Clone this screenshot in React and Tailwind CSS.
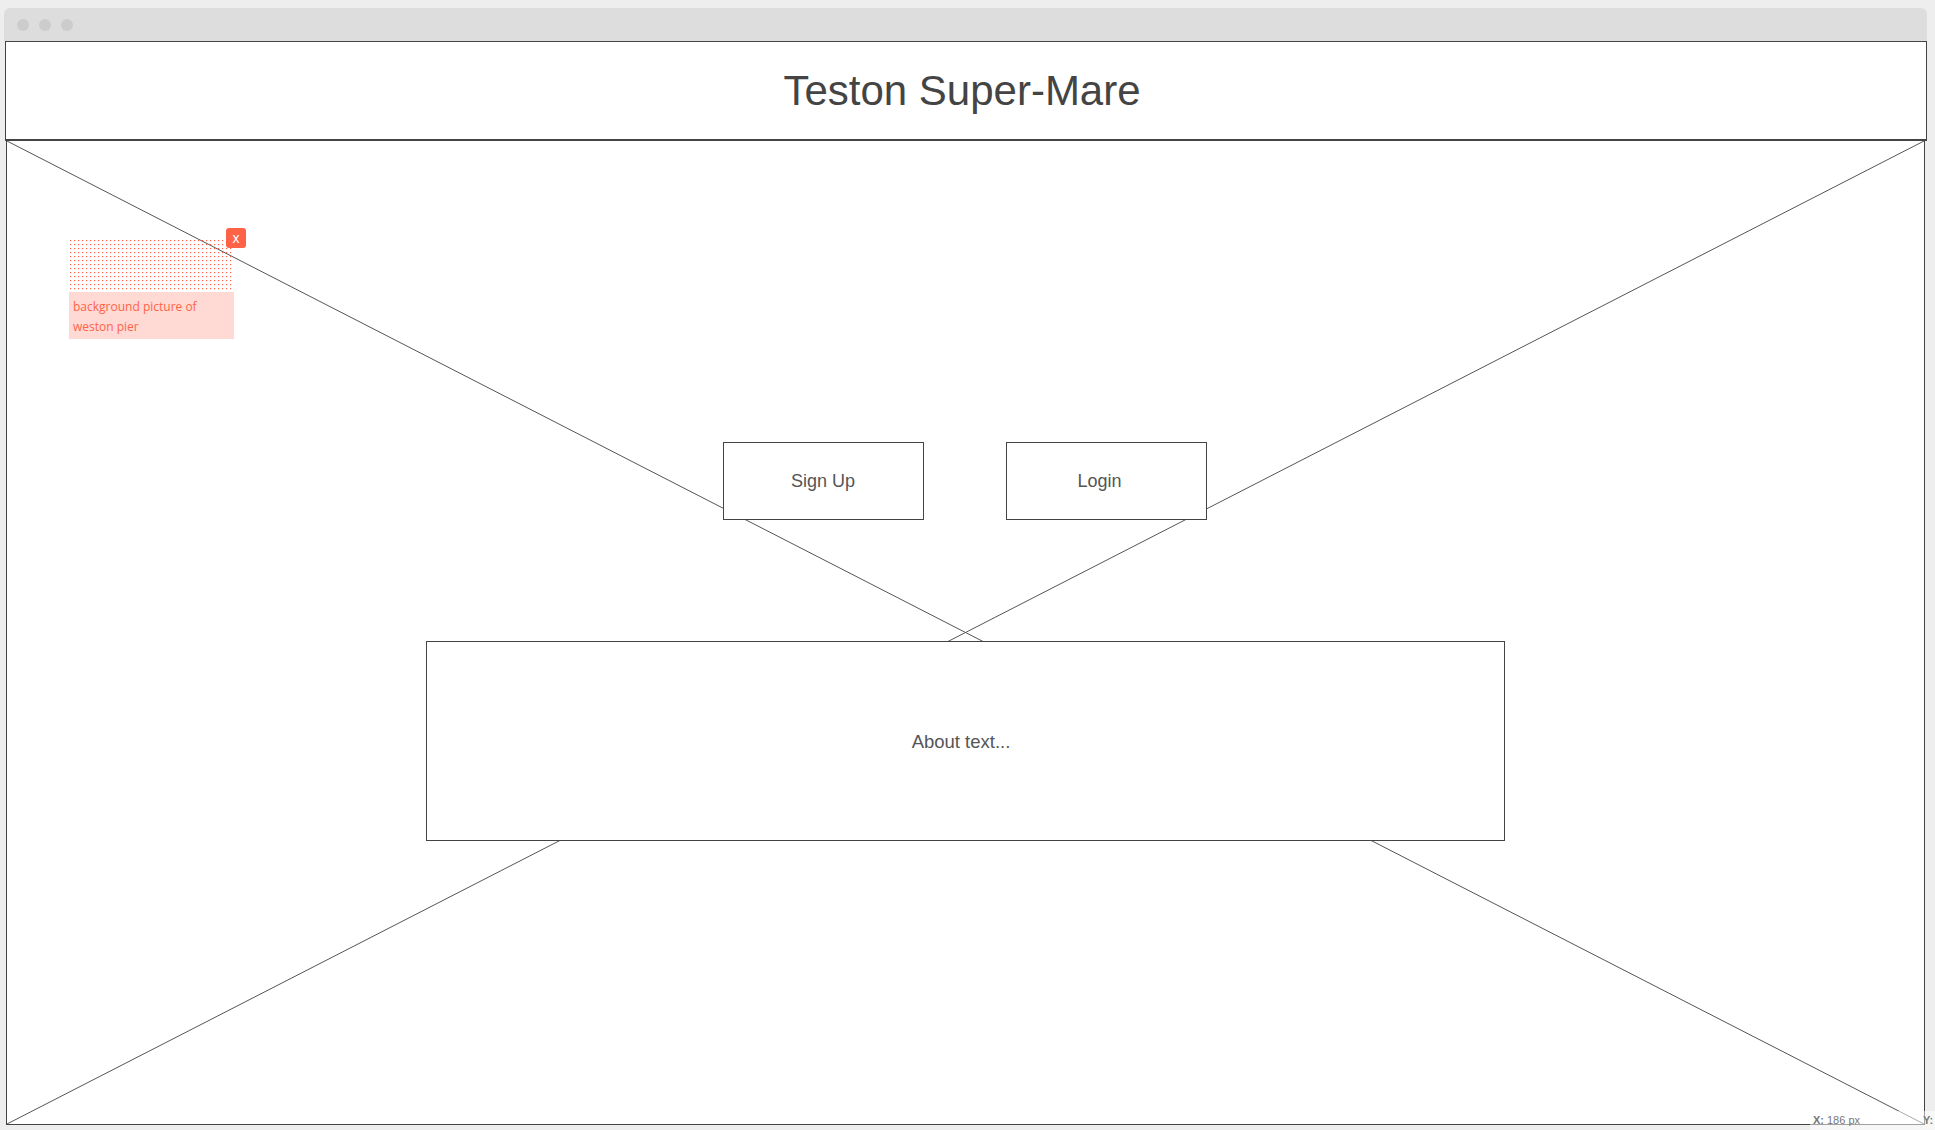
const Dot = () => <div className="w-[12px] h-[12px] rounded-full bg-[#cccccc]" />;

const BrowserBar = () => {
  return (
    <div className="w-[1923px] h-[33px] bg-[#dddddd] rounded-t-[6px] flex items-center gap-[10px] pl-[13px]">
      <Dot />
      <Dot />
      <Dot />
    </div>
  );
};

const Header = () => {
  return (
    <div className="ml-[1px] w-[1922px] h-[100px] bg-white border border-b-2 border-[#444444] flex items-center justify-center">
      <h1 className="text-[42px] leading-none text-[#444444] -ml-[8px] mt-[1px]">
        Teston Super-Mare
      </h1>
    </div>
  );
};

// picture placeholder cross
const Cross = () => {
  return (
    <svg
      className="absolute inset-0 w-full h-full"
      viewBox="0 0 100 100"
      preserveAspectRatio="none"
    >
      <line x1="0" y1="0" x2="100" y2="100" stroke="#555555" strokeWidth="1" vectorEffect="non-scaling-stroke" />
      <line x1="100" y1="0" x2="0" y2="100" stroke="#555555" strokeWidth="1" vectorEffect="non-scaling-stroke" />
    </svg>
  );
};

const Dots = () => (
  <svg width="163" height="53" className="block">
    <defs>
      <pattern id="notedots" width="4" height="4" patternUnits="userSpaceOnUse">
        <rect x="1" y="1" width="1.2" height="1.2" fill="#ff6347" />
      </pattern>
    </defs>
    <rect width="163" height="53" fill="url(#notedots)" />
  </svg>
);

const Note = () => {
  return (
    <div className="absolute left-[62px] top-[98px] w-[178px]">
      <Dots />
      <div
        className="w-[165px] h-[47px] bg-[#ffd9d3] px-[4px] pt-[5px] text-[12px] leading-[20px] text-[#ff6347]"
        style={{ fontFamily: '"Open Sans", sans-serif' }}
      >
        background picture of
        <br />
        weston pier
      </div>
      <div className="absolute left-[157px] -top-[11px] w-[20px] h-[20px] rounded-[3px] bg-[#ff6347] text-white text-[14px] leading-[20px] text-center">
        x
      </div>
    </div>
  );
};

const Box = ({ className, children }) => (
  <div
    className={`bg-white border border-[#444444] flex items-center justify-center text-[18px] text-[#555555] ${className}`}
  >
    {children}
  </div>
);

const Main = () => {
  return (
    <div className="relative ml-[2px] w-[1919px] h-[984px] bg-white border-x border-b border-[#444444]">
      <Cross />
      <Note />
      <div className="relative flex flex-col items-center pt-[301px]">
        <div className="flex gap-[82px] -ml-[2px]">
          <Box className="w-[201px] h-[78px]">Sign Up</Box>
          <Box className="w-[201px] h-[78px]">
            <span className="-ml-[13px]">Login</span>
          </Box>
        </div>
        <Box className="mt-[121px] w-[1079px] h-[200px]">
          <span className="-ml-[9px] mt-[2px] text-[18.5px]">About text...</span>
        </Box>
      </div>
    </div>
  );
};

const Coords = () => {
  return (
    <div className="absolute left-[1810px] top-[1111px] w-[125px] h-[19px] bg-white/50 flex items-center text-[11px] text-[#777777] overflow-hidden whitespace-nowrap">
      <span className="ml-[3px] font-bold">X:</span>
      <span className="ml-[3px]">186 px</span>
      <span className="ml-[63px] font-bold">Y:</span>
    </div>
  );
};

export default function App() {
  return (
    <div
      className="relative w-[1935px] h-[1130px] bg-[#eeeeee] pt-[8px] pl-[4px] overflow-hidden"
      style={{ fontFamily: '"Liberation Sans", Arial, sans-serif' }}
    >
      <BrowserBar />
      <Header />
      <Main />
      <Coords />
    </div>
  );
}
